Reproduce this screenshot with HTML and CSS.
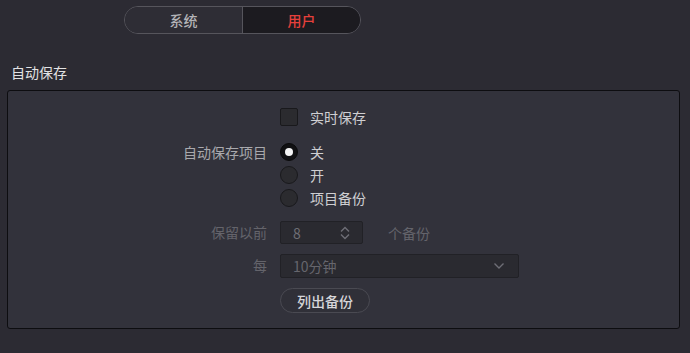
FILE: index.html
```html
<!DOCTYPE html>
<html lang="zh">
<head>
<meta charset="utf-8">
<link rel="stylesheet" href="styles.css">
</head>
<body>
<div class="seg">
  <div class="seg-item">系统</div>
  <div class="seg-item active">用户</div>
</div>
<div class="heading">自动保存</div>
<div class="panel">
  <div class="row r-check">
    <div class="label"></div>
    <div class="ctrl"><span class="checkbox"></span><span class="opt">实时保存</span></div>
  </div>
  <div class="row r-radios">
    <div class="label">自动保存项目</div>
    <div class="radios">
      <div class="ctrl"><span class="radio on"></span><span class="opt">关</span></div>
      <div class="ctrl"><span class="radio"></span><span class="opt">开</span></div>
      <div class="ctrl"><span class="radio"></span><span class="opt">项目备份</span></div>
    </div>
  </div>
  <div class="row r-spin">
    <div class="label dim">保留以前</div>
    <div class="ctrl">
      <div class="spin"><span>8</span>
        <svg width="12" height="14" viewBox="0 0 12 14"><path d="M2 5.5 L6 1.5 L10 5.5 M2 8.5 L6 12.5 L10 8.5" fill="none" stroke="#6e6e76" stroke-width="1.4"/></svg>
      </div>
      <span class="unit dim">个备份</span>
    </div>
  </div>
  <div class="row r-drop">
    <div class="label dim">每</div>
    <div class="drop"><span>10分钟</span>
      <svg width="12" height="8" viewBox="0 0 12 8"><path d="M1.5 1.5 L6 6 L10.5 1.5" fill="none" stroke="#6e6e76" stroke-width="1.4"/></svg>
    </div>
  </div>
  <div class="row r-btn">
    <div class="label"></div>
    <div class="btn">列出备份</div>
  </div>
</div>
</body>
</html>
```
FILE: styles.css
```css
html, body { margin: 0; padding: 0; }
body {
  width: 690px; height: 353px; overflow: hidden;
  background: #2c2b33;
  font-family: "Noto Sans CJK SC", "Noto Sans", sans-serif;
  font-size: 14px;
  color: #c9c9cc;
}
.seg {
  display: flex;
  margin: 6px 0 0 124px;
  width: 237px; height: 28px;
  box-sizing: border-box;
  border: 1px solid #56555c;
  border-radius: 14px;
  overflow: hidden;
}
.seg-item {
  flex: 1;
  display: flex; align-items: center; justify-content: center;
  background: #2e2d35;
  color: #b4b4b8;
  font-weight: 500;
  font-size: 14px;
}
.seg-item.active {
  background: #1c1b20;
  color: #e5403b;
  border-left: 1px solid #56555c;
}
.heading {
  margin: 28px 0 0 11px;
  height: 20px; line-height: 20px;
  color: #e2e2e4;
  font-size: 14px;
}
.panel {
  margin: 8px 0 0 7px;
  width: 673px; height: 239px;
  box-sizing: border-box;
  border: 1px solid #0d0d10;
  border-radius: 3px;
  background: #32323b;
  padding-top: 17px;
  display: flex; flex-direction: column;
}
.row { display: flex; align-items: flex-start; }
.label {
  width: 272px; box-sizing: border-box;
  padding-right: 13px;
  text-align: right;
  height: 18px; line-height: 18px;
  color: #a9a9ad;
  flex: none;
}
.dim { color: #64646b; }
.ctrl { display: flex; align-items: center; height: 18px; }
.opt { margin-left: 12px; line-height: 18px; color: #cfcfd2; }
.checkbox {
  width: 18px; height: 18px; box-sizing: border-box;
  background: #2b2b2f;
  border: 1px solid #19191c;
  border-radius: 2px;
}
.r-radios { margin-top: 17px; }
.radios { display: flex; flex-direction: column; gap: 5px; }
.radio {
  width: 18px; height: 18px; box-sizing: border-box;
  border-radius: 50%;
  background: #2b2b2f;
  border: 1px solid #19191c;
  display: flex; align-items: center; justify-content: center;
}
.radio.on { background: #111113; border: 1px solid #0a0a0b; }
.radio.on::after {
  content: ""; width: 8px; height: 8px; border-radius: 50%; background: #f4f4f4;
}
.r-spin { margin-top: 14px; align-items: center; height: 23px; }
.r-spin .label, .r-drop .label { line-height: 23px; height: 23px; }
.r-spin .ctrl { height: 23px; }
.spin {
  width: 83px; height: 23px; box-sizing: border-box;
  background: #2a2a30;
  border: 1px solid #212126;
  border-radius: 2px;
  display: flex; align-items: center; justify-content: space-between;
  padding: 0 11px 0 12px;
  color: #6e6e75;
}
.unit { margin-left: 25px; }
.r-drop { margin-top: 10px; }
.drop {
  width: 239px; height: 24px; box-sizing: border-box;
  background: #2a2a30;
  border: 1px solid #212126;
  border-radius: 2px;
  display: flex; align-items: center; justify-content: space-between;
  padding: 0 13px 0 12px;
  color: #66666d;
}
.r-btn { margin-top: 10px; }
.btn {
  width: 90px; height: 25px; box-sizing: border-box;
  border: 1px solid #4a4a52;
  border-radius: 13px;
  background: #303038;
  display: flex; align-items: center; justify-content: center;
  color: #d6d6d9;
  font-weight: 500;
}
```
